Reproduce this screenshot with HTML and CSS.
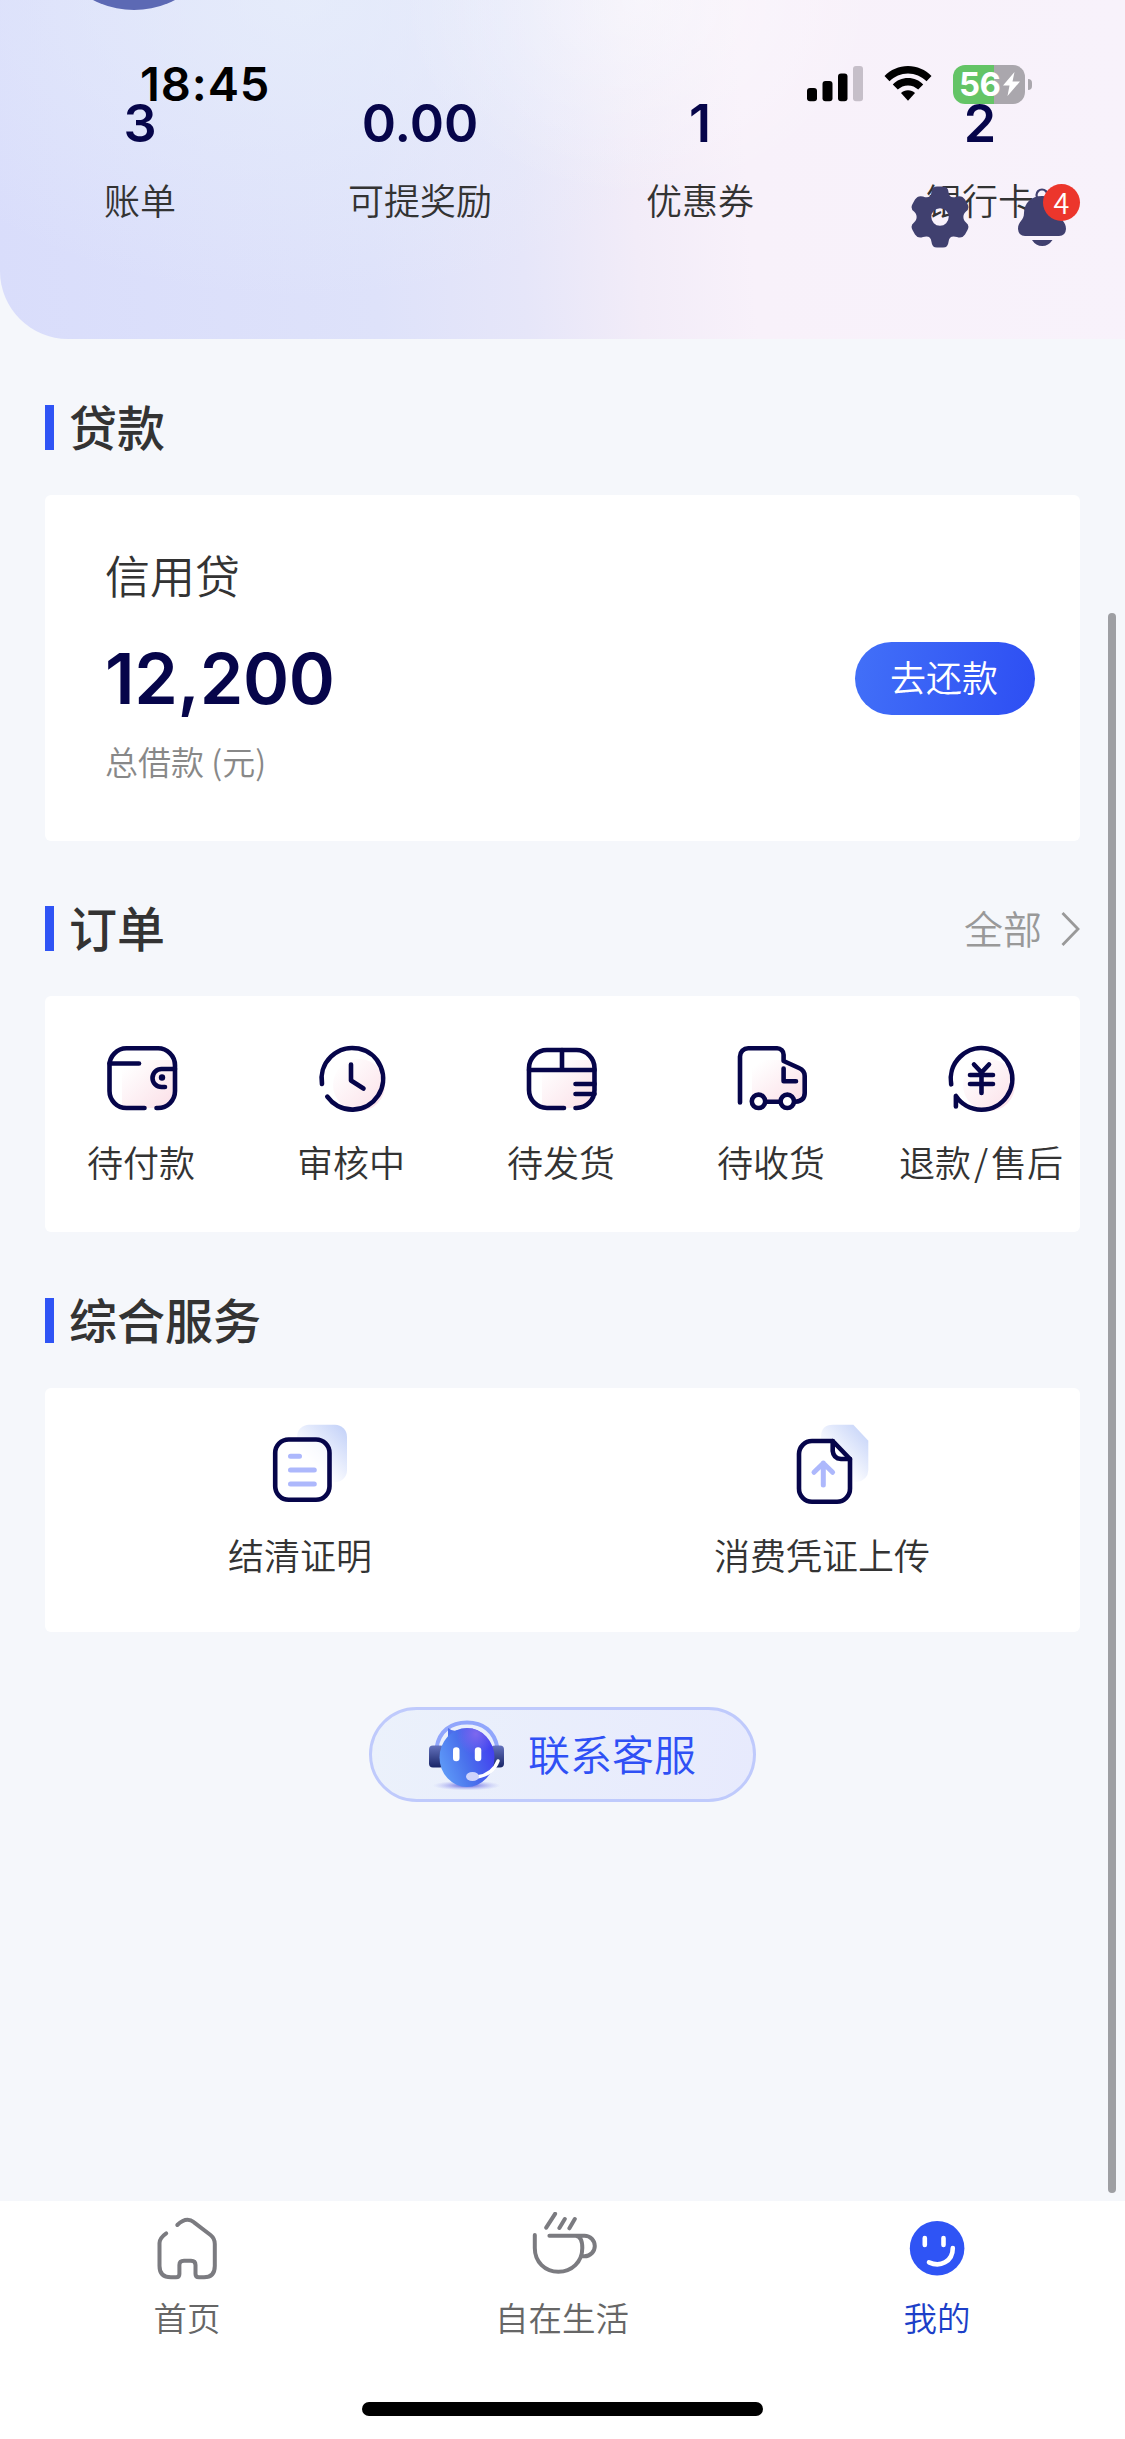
FILE: index.html
```html
<!DOCTYPE html>
<html lang="zh-CN">
<head>
<meta charset="utf-8">
<title>我的</title>
<link rel="stylesheet" href="styles.css">
</head>
<body>
<div class="app">
  <header class="hero">
    <div class="avatar"></div>
    <div class="stats">
      <div class="stat"><b>3</b><span>账单</span></div>
      <div class="stat"><b>0.00</b><span>可提奖励</span></div>
      <div class="stat"><b>1</b><span>优惠券</span></div>
      <div class="stat"><b>2</b><span>银行卡</span></div>
    </div>
  </header>

  <main class="content">
    <div class="section-head"><h2>贷款</h2></div>
    <section class="card loan">
      <div class="loan-info">
        <div class="loan-name">信用贷</div>
        <div class="loan-amount">12,200</div>
        <div class="loan-note">总借款 (元)</div>
      </div>
      <a class="repay">去还款</a>
    </section>

    <div class="section-head">
      <h2>订单</h2>
      <a class="more"><span>全部</span>
        <svg width="20" height="36" viewBox="0 0 20 36"><path d="M2.500 2 18 18 2.500 34"/></svg>
      </a>
    </div>
    <section class="card orders">
      <a class="entry">
        <svg class="order-icon" viewBox="0 0 72 72">
          <defs>
            <linearGradient id="pink" x1="0" y1="0" x2="1" y2="1"><stop offset="0.100" stop-color="#fff"/><stop offset="1" stop-color="#fbdfe7"/></linearGradient>
            <linearGradient id="sky" x1="1" y1="0" x2="0.200" y2="0.900"><stop offset="0" stop-color="#c0cff8"/><stop offset="0.800" stop-color="#fff"/></linearGradient>
          </defs>
          <path fill="url(#pink)" d="M16 17H67V47A18 18 0 0 1 50 65H16Z"/>
          <g class="ink"><path d="M38.500 65H20.500A17 17 0 0 1 3.500 48V22.300A17 17 0 0 1 20.500 5.300H52A17 17 0 0 1 69 22.300V48A17 17 0 0 1 52 65H50.500"/><path d="M3.500 20.500H33"/><path d="M69 26H55.500a9 9 0 0 0 0 18H59"/></g>
          <circle cx="56" cy="34.500" r="3.200" fill="#06054a"/>
        </svg>
        <span>待付款</span>
      </a>
      <a class="entry">
        <svg class="order-icon" viewBox="0 0 72 72">
          <circle cx="43" cy="42" r="26" fill="url(#pink)"/>
          <g class="ink"><path d="M6 41A30.800 30.800 0 1 1 11.300 53.700"/><path d="M35 21.500V37.500L47.500 45.500"/></g>
        </svg>
        <span>审核中</span>
      </a>
      <a class="entry">
        <svg class="order-icon" viewBox="0 0 72 72">
          <path fill="url(#pink)" d="M16 17H67V47A18 18 0 0 1 50 65H16Z"/>
          <g class="ink"><path d="M38 65H21A18 18 0 0 1 3 47V25A18 18 0 0 1 21 7H50.500A18 18 0 0 1 68.500 25V47A18 18 0 0 1 50.500 65H49.500"/><path d="M3 27H68.500M36 7V27M49.500 41H68.500M49.500 51H68.500"/></g>
        </svg>
        <span>待发货</span>
      </a>
      <a class="entry">
        <svg class="order-icon" viewBox="0 0 72 72">
          <path fill="url(#pink)" d="M16 17H47L68 29V57H16Z"/>
          <g class="ink"><path d="M4 59.500V13.500A8.200 8.200 0 0 1 12.200 5.300H41A6.500 6.500 0 0 1 47.600 12V18L63 25Q68.700 27.500 68.700 33V50Q68.700 58 59.500 58.700"/><path d="M30 58.700H44M47.600 25.500V38.300H60"/><circle cx="22.500" cy="58.300" r="6.700" fill="#fff"/><circle cx="51.300" cy="58.300" r="6.700" fill="#fff"/></g>
        </svg>
        <span>待收货</span>
      </a>
      <a class="entry">
        <svg class="order-icon" viewBox="0 0 72 72">
          <circle cx="43" cy="42" r="26" fill="url(#pink)"/>
          <g class="ink"><path d="M5.200 41.300A30.800 30.800 0 1 1 9.900 53V63.500"/><path d="M28 21.500 35.500 29.500 43 21.500M35.500 29.500V50M24 32H47M24 41H47"/></g>
        </svg>
        <span>退款<i>/</i>售后</span>
      </a>
    </section>

    <div class="section-head last"><h2>综合服务</h2></div>
    <section class="card services">
      <a class="entry">
        <svg class="service-icon" viewBox="0 0 96 88">
          <rect x="44" y="4.700" width="50" height="57.500" rx="12" fill="url(#sky)"/>
          <rect x="22.200" y="19.500" width="54.300" height="60.300" rx="13.500" fill="#fff" fill-opacity=".65"/>
          <g class="ink"><rect x="22.200" y="19.500" width="54.300" height="60.300" rx="13.500"/></g>
          <path class="accent" d="M37.500 36.300H46.500M37.500 50H61.300M37.500 64H61.300"/>
        </svg>
        <span>结清证明</span>
      </a>
      <a class="entry">
        <svg class="service-icon" viewBox="0 0 96 88">
          <path fill="url(#sky)" d="M58 4.700H78.300L93.300 20.700V50Q93 60 82 62H46V17Q46 4.700 58 4.700Z"/>
          <path d="M37 21H57.700L75 39V68.500A13 13 0 0 1 62 81.700H37A13 13 0 0 1 24 68.500V34A13 13 0 0 1 37 21Z" fill="#fff" fill-opacity=".85"/>
          <g class="ink"><path d="M37 21H57.700L75 39V68.500A13 13 0 0 1 62 81.700H37A13 13 0 0 1 24 68.500V34A13 13 0 0 1 37 21Z"/><path d="M57.700 21V31Q58.500 38.500 66 39H75"/></g>
          <path class="accent" d="M48.300 65V43M39 52.300 48.300 43.300 57.600 52.300"/>
        </svg>
        <span>消费凭证上传</span>
      </a>
    </section>

    <a class="contact">
      <svg width="81" height="78" viewBox="0 0 81 78">
        <defs>
          <linearGradient id="head" x1="0" y1="0.700" x2="1" y2="0.300"><stop offset="0" stop-color="#5f9cf8"/><stop offset="0.450" stop-color="#4a72ec"/><stop offset="1" stop-color="#423bf0"/></linearGradient>
          <radialGradient id="glow" cx="0.660" cy="0.100" r="0.350"><stop offset="0" stop-color="#7d68ee"/><stop offset="1" stop-color="#7d68ee" stop-opacity="0"/></radialGradient>
          <radialGradient id="shade"><stop offset="0" stop-color="#5352d8"/><stop offset="1" stop-color="#a9aef5" stop-opacity="0"/></radialGradient>
          <linearGradient id="ear" x1="0" y1="0" x2="0" y2="1"><stop offset="0" stop-color="#6472bd"/><stop offset="1" stop-color="#182567"/></linearGradient>
        </defs>
        <ellipse cx="40.700" cy="69.500" rx="34" ry="5" fill="url(#shade)"/>
        <path d="M10.500 32C13 15 25 6.500 41 6.500S68.500 15 71.500 32" fill="none" stroke="#91a6fc" stroke-width="4"/>
        <rect x="3" y="29.500" width="15" height="22" rx="4" fill="url(#ear)"/>
        <rect x="65" y="29.500" width="13" height="22" rx="4" fill="url(#ear)"/>
        <path d="M22 12Q27 16 32 14L22 24Z" fill="#4d6eea"/>
        <ellipse cx="41" cy="41.500" rx="27.500" ry="29.500" fill="url(#head)"/>
        <ellipse cx="41" cy="41.500" rx="27.500" ry="29.500" fill="url(#glow)"/>
        <rect x="27" y="31.300" width="6.500" height="14" rx="3.200" fill="#fff"/>
        <rect x="48.800" y="31.300" width="6.500" height="14" rx="3.200" fill="#fff"/>
        <path d="M72 45C69 53 63 59 51 61" fill="none" stroke="#fff" stroke-width="3.500" stroke-linecap="round"/>
        <ellipse cx="46.500" cy="60.500" rx="6.500" ry="4.600" fill="#cfd3fb"/>
      </svg>
      <span>联系客服</span>
    </a>
  </main>

  <nav class="tabs">
    <a class="tab">
      <svg class="tab-icon" viewBox="0 0 72 72"><path d="M25.300 13Q34.500 4 42 10.300L58.500 23Q62.800 26.500 62.800 32V54Q62.800 65.300 52 65.300H47Q43.500 65.300 43.500 62V53Q43.500 48.700 39 48.700H32Q27.400 48.700 27.400 53V62Q27.400 65.300 24 65.300H19Q7.500 65.300 7.500 54V31Q7.500 26 14.200 21.300"/></svg>
      <span>首页</span>
    </a>
    <a class="tab">
      <svg class="tab-icon" viewBox="0 0 72 72"><path d="M7.800 23V36C7.800 50 18 59.700 31.400 59.700S55.300 50 55.300 36Q55.300 24 48.500 23.700M22.400 23.700H57.500A10.300 10.300 0 0 1 57.500 44.300H54M28.100 1.800 19.200 15.700M37.800 7 32.400 16M47.800 7 42.400 16.300"/></svg>
      <span>自在生活</span>
    </a>
    <a class="tab active">
      <svg class="tab-icon" viewBox="0 0 72 72"><circle cx="35.100" cy="36.300" r="27.300" fill="#2f54f5" stroke="none"/><path class="face" d="M22.800 26V33M41.500 26V33M27 50.300C38 55.500 50.800 50 50.800 36"/></svg>
      <span>我的</span>
    </a>
    <div class="home-indicator"></div>
  </nav>

  <div class="status">
    <span class="time">18:45</span>
    <svg class="signal" width="57" height="36" viewBox="0 0 57 36"><rect x="0" y="22" width="10" height="13.300" rx="3"/><rect x="15.500" y="15" width="10" height="20.300" rx="3"/><rect x="31" y="7.500" width="9.500" height="27.800" rx="3"/><rect x="46" y="0" width="10" height="35.300" rx="3" fill="#c6bfc9"/></svg>
    <svg class="wifi" width="48" height="36" viewBox="0 0 48 36"><path d="M24 0C33 0 41.500 3.700 47.500 10L42.500 15.200C37.500 10.200 31 7.400 24 7.400S10.500 10.200 5.500 15.200L.5 10C6.500 3.700 15 0 24 0Z"/><path d="M24 12C30 12 35.200 14.400 39.200 18.400L34.200 23.600C31.400 20.900 28 19.400 24 19.400S16.600 20.900 13.800 23.600L8.800 18.400C12.800 14.400 18 12 24 12Z"/><path d="M24 24.300C26.800 24.300 29 25.300 31 26.900L24 34.800 17 26.900C19 25.300 21.200 24.300 24 24.300Z"/></svg>
    <div class="battery"><span>56</span><svg width="17" height="24" viewBox="0 0 17 24"><path d="M11.500 0 0 13.500H6.500L4.500 24 17 9.500H9.500Z" fill="#fff"/></svg></div>
  </div>

  <div class="tools">
    <svg class="gear" width="58" height="62" viewBox="-29 -31 58 62">
      <path fill="#40406f" fill-rule="evenodd" d="M-8.500 -25Q-8 -30.500 -3 -30.500H3Q8 -30.500 8.500 -25C9 -20 12 -18.500 17 -20.500Q22 -22 25 -17.500L27.500 -13Q30 -8.500 26 -5.500C22.500 -2.500 22.500 2.500 26 5.500Q30 8.500 27.500 13L25 17.500Q22 22 17 20C12 18.500 9 20 8.500 25Q8 30.500 3 30.500H-3Q-8 30.500 -8.500 25C-9 20 -12 18.500 -17 20Q-22 22 -25 17.500L-27.500 13Q-30 8.500 -26 5.500C-22.500 2.500 -22.500 -2.500 -26 -5.500Q-30 -8.500 -27.500 -13L-25 -17.500Q-22 -22 -17 -20.500C-12 -18.500 -9 -20 -8.500 -25ZM8.700 0A8.700 8.700 0 1 0 -8.700 0A8.700 8.700 0 1 0 8.700 0Z"/>
    </svg>
    <div class="bell">
      <svg width="50" height="60" viewBox="0 0 50 60"><circle cx="25" cy="7" r="5.500" fill="none" stroke="#40406f" stroke-width="2.200"/><path fill="#40406f" d="M25 8C35.500 8 43 15 43 25 43 33 49 33 49 41Q48.500 48 42 48H8Q1.500 48 1 41C1 33 7 33 7 25 7 15 14.500 8 25 8ZM15 52H35.500Q31.500 58 25.200 58T15 52Z"/></svg>
      <em>4</em>
    </div>
  </div>
  <div class="scrollbar"></div>
</div>
</body>
</html>
```
FILE: styles.css
```css
* { box-sizing: border-box; }
body {
  margin: 0;
  background: #f5f7fb;
  color: #333;
  font-family: "Noto Sans CJK SC", sans-serif;
  font-weight: 350;
}
h2, b, i, em { margin: 0; font-weight: inherit; font-style: normal; }
svg { display: block; flex: none; }

.app {
  position: relative;
  display: flex;
  flex-direction: column;
  width: 1125px;
  height: 2439px;
  overflow: hidden;
}

/* Top banner */
.hero {
  position: relative;
  height: 339px;
  padding-top: 94px;
  border-bottom-left-radius: 68px;
  overflow: hidden;
  background:
    radial-gradient(ellipse 240px 200px at 640px 0, rgba(255,255,255,.45), rgba(255,255,255,0)),
    radial-gradient(ellipse 460px 300px at 300px 0, rgba(233,240,251,.7), rgba(233,240,251,0)),
    linear-gradient(86deg, #d9ddfb 0%, #dee2fa 33%, #e6e6f9 46%, #f2ecf8 56%, #f8f1fa 66%, #f8f2fb 100%);
}
.avatar {
  position: absolute;
  left: 45px;
  top: -168px;
  width: 178px;
  height: 178px;
  border-radius: 50%;
  background: #5c69b4;
}
.stats { display: flex; width: 1120px; }
.stat {
  flex: 1;
  display: flex;
  flex-direction: column;
  align-items: center;
  gap: 25px;
}
.stat b {
  font: 600 52px/60px Inter, sans-serif;
  color: #06054a;
}
.stat span { font-size: 36px; line-height: 40px; }

/* Sections */
.content {
  flex: 1;
  display: flex;
  flex-direction: column;
  padding: 0 45px;
}
.section-head {
  display: flex;
  align-items: center;
  justify-content: space-between;
  height: 45px;
  margin: 66px 0 45px;
}
.card + .section-head { margin-top: 65px; }
.card + .section-head.last { margin-top: 66px; }
.section-head h2 {
  height: 45px;
  padding-left: 15px;
  border-left: 9px solid #2f54f5;
  font-size: 48px;
  font-weight: 500;
  line-height: 40px;
}
.more {
  display: flex;
  align-items: center;
  gap: 18px;
  color: #999;
  font-size: 39px;
  line-height: 42px;
}
.more span { margin-top: -3px; }
.more path { fill: none; stroke: #999; stroke-width: 2.8; }
.card { background: #fff; border-radius: 6px; }

.loan {
  display: flex;
  align-items: center;
  justify-content: space-between;
  height: 346px;
  padding: 0 45px 0 60px;
}
.loan-info { display: flex; flex-direction: column; }
.loan-name { margin-top: -8px; font-size: 45px; line-height: 60px; }
.loan-amount {
  margin: 34px 0 20px;
  font: 600 70px/80px Inter, sans-serif;
  letter-spacing: -0.3px;
  color: #06054a;
}
.loan-note { font-size: 33px; line-height: 44px; color: #888; }
.repay {
  width: 180px;
  height: 73px;
  margin-top: 20px;
  border-radius: 37px;
  background: linear-gradient(100deg, #4270f8, #2d4ef3);
  color: #fff;
  font-size: 36px;
  line-height: 69px;
  text-align: center;
  text-indent: -2px;
}

.entry {
  flex: 1;
  display: flex;
  flex-direction: column;
  align-items: center;
  font-size: 36px;
  line-height: 44px;
}
.entry span { margin-left: -2px; }
.orders { display: flex; height: 236px; padding-top: 47px; }
.orders .entry { gap: 24px; flex: 0 0 210px; }
.orders .entry:first-child { margin-left: -8px; }
.entry i { margin: 0 3px; }
.order-icon { width: 72px; height: 72px; }
.services { display: flex; height: 244px; padding-top: 32px; }
.services .entry { gap: 24px; flex: 0 0 522px; }
.services .entry:first-child { margin-left: -5px; }
.service-icon { width: 96px; height: 88px; }
.ink { fill: none; stroke: #06054a; stroke-width: 4.6; stroke-linecap: round; stroke-linejoin: round; }
.accent { fill: none; stroke: #adb8fc; stroke-width: 5; stroke-linecap: round; stroke-linejoin: round; }

.contact {
  align-self: center;
  display: flex;
  align-items: center;
  gap: 21px;
  width: 387px;
  height: 95px;
  margin-top: 75px;
  padding-left: 54px;
  border: 3px solid #bfcafc;
  border-radius: 48px;
  background: linear-gradient(100deg, #ebf1fb, #e7eafd);
  color: #2f50f5;
  font-size: 42px;
  line-height: 50px;
}
.contact span { margin-top: -4px; }

/* Bottom tabs */
.tabs {
  position: relative;
  display: flex;
  height: 238px;
  padding-top: 11px;
  background: #fff;
}
.tab {
  flex: 1;
  display: flex;
  flex-direction: column;
  align-items: center;
  gap: 13px;
  color: #666;
  font-size: 33.500px;
  line-height: 40px;
}
.tab span { margin-left: -1px; }
.tab.active { color: #1c3fc8; }
.tab-icon {
  width: 72px;
  height: 72px;
  fill: none;
  stroke: #7b7b80;
  stroke-width: 4;
  stroke-linecap: round;
  stroke-linejoin: round;
}
.tab-icon .face { stroke: #fff; stroke-width: 4.6; }
.home-indicator {
  position: absolute;
  left: 362px;
  top: 201px;
  width: 401px;
  height: 14px;
  border-radius: 7px;
  background: #000;
}

/* Overlays */
.status {
  position: absolute;
  top: 57px;
  left: 0;
  display: flex;
  align-items: center;
  width: 1125px;
  height: 54px;
  padding-left: 140px;
}
.time {
  width: 667px;
  font: 600 47px/54px Inter, sans-serif;
  letter-spacing: 0.9px;
  color: #000;
}
.wifi { margin-left: 20px; }
.battery {
  position: relative;
  display: flex;
  align-items: center;
  gap: 2px;
  width: 72px;
  height: 39px;
  margin-left: 21px;
  padding-left: 6px;
  border-radius: 12px;
  background: linear-gradient(90deg, #64c466 56.5%, #aaa7ad 56.5%);
}
.battery span { font: 700 33px/39px Inter, sans-serif; color: #fff; letter-spacing: -0.5px; }
.battery::after {
  content: "";
  position: absolute;
  left: 75px;
  top: 14px;
  width: 4px;
  height: 11px;
  border-radius: 0 4px 4px 0;
  background: #aaa7ad;
}
.tools {
  position: absolute;
  left: 911px;
  top: 186px;
  display: flex;
  gap: 48px;
}
.bell { position: relative; padding-top: 2px; }
.bell em {
  position: absolute;
  left: 26px;
  top: -2px;
  width: 37px;
  height: 37px;
  border-radius: 50%;
  background: #ec362c;
  color: #fff;
  font-size: 29px;
  line-height: 35px;
  text-align: center;
}
.scrollbar {
  position: absolute;
  left: 1108px;
  top: 613px;
  width: 8px;
  height: 1580px;
  border-radius: 4px;
  background: #9e9fa3;
}
```
